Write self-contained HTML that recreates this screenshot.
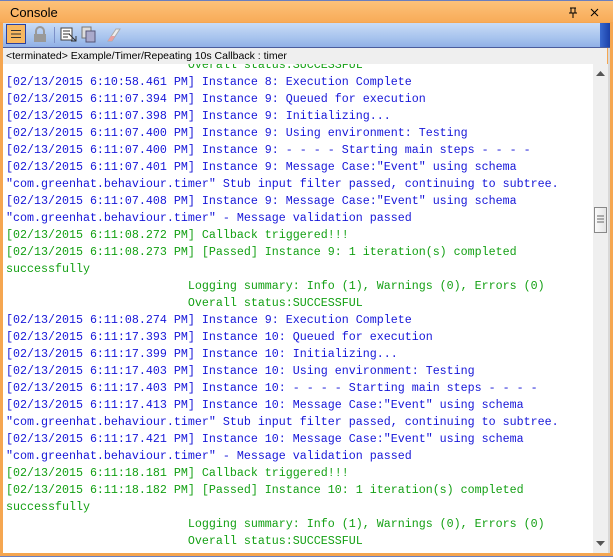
<!DOCTYPE html>
<html><head><style>
body{margin:0;width:613px;height:557px;overflow:hidden;background:#f5a650;font-family:"Liberation Sans",sans-serif;position:relative}
.title{position:absolute;left:0;top:0;width:613px;height:22px;background:linear-gradient(#fcc27a,#f8ab58);border-top:1px solid #6a7fbf;box-sizing:border-box}
.title span{position:absolute;left:10px;top:4px;font-size:13px;color:#000}
.tb{position:absolute;left:3px;top:23px;width:607px;height:24px;background:linear-gradient(#c9dcf6,#a8c4ee 60%,#90b0e6);border-bottom:1px solid #4a5c9c}
.tbend{position:absolute;right:0;top:0;width:10px;height:24px;background:linear-gradient(90deg,#3a6ad0,#1a40a8)}
.path{position:absolute;left:3px;top:48px;width:604px;height:16px;background:#efefef;font-size:10.5px;line-height:16px;padding-left:3px;box-sizing:border-box}
.con{position:absolute;left:3px;top:64px;width:590px;height:489px;background:#fff;overflow:hidden}
.lines{position:absolute;left:3px;top:-7px;font-family:"Liberation Mono",monospace;font-size:11.67px;line-height:17px;white-space:pre}
.b{color:#1616d8}.g{color:#14a014}
.sb{position:absolute;left:593px;top:64px;width:15px;height:489px;background:#efefef;border-right:1px solid #ccc}
.edge{position:absolute;left:608px;top:48px;width:2px;height:505px;background:#d8d8d8}
.bot{position:absolute;left:0;top:553px;width:613px;height:4px;background:#f5a650;border-bottom:1px solid #6a7fbf;box-sizing:border-box}
</style></head><body>
<div class="title"><span>Console</span>
<svg style="position:absolute;left:568px;top:6px" width="10" height="11"><path d="M2 1h6M3 1v5M7 1v5M1 6h8M5 6v5" stroke="#000" fill="none"/></svg>
<svg style="position:absolute;left:590px;top:7px" width="9" height="9"><path d="M1 1l7 7M8 1l-7 7" stroke="#000"/></svg>
</div>
<div class="tb">
<div style="position:absolute;left:3px;top:1px;width:20px;height:20px;background:#f8b860;border:1px solid #2a40a0;box-sizing:border-box"></div>
<svg style="position:absolute;left:7px;top:6px" width="12" height="10"><path d="M1 1.5h10M1 5h10M1 8.5h10" stroke="#333"/></svg>
<svg style="position:absolute;left:30px;top:3px" width="14" height="17"><path d="M3 8V5a4 4 0 0 1 8 0v3" stroke="#999" fill="none" stroke-width="2"/><rect x="1" y="8" width="12" height="8" fill="#999"/></svg>
<div style="position:absolute;left:51px;top:4px;width:1px;height:16px;background:#7c90c8"></div>
<svg style="position:absolute;left:57px;top:3px" width="18" height="18"><rect x="1" y="2" width="11" height="12" fill="#fff" stroke="#444"/><path d="M3 5h7M3 8h7M3 11h5M9 8l7 7M11 15h5v-5" stroke="#333" fill="none"/></svg>
<svg style="position:absolute;left:78px;top:3px" width="16" height="18"><rect x="1" y="1" width="9" height="11" fill="#ddd" stroke="#777"/><rect x="5" y="5" width="9" height="11" fill="#aac" stroke="#557"/></svg>
<svg style="position:absolute;left:102px;top:4px" width="16" height="16"><path d="M3 14l8-12h4l-8 12z" fill="#eee" stroke="#aaa"/><path d="M3 14l3-5h4l-3 5z" fill="#e9a0a0"/></svg>
<div class="tbend"></div>
</div>
<div class="path">&lt;terminated&gt; Example/Timer/Repeating 10s Callback : timer</div>
<div class="con"><div class="lines"><span class="g">                          Overall status:SUCCESSFUL</span>
<span class="b">[02/13/2015 6:10:58.461 PM] Instance 8: Execution Complete</span>
<span class="b">[02/13/2015 6:11:07.394 PM] Instance 9: Queued for execution</span>
<span class="b">[02/13/2015 6:11:07.398 PM] Instance 9: Initializing...</span>
<span class="b">[02/13/2015 6:11:07.400 PM] Instance 9: Using environment: Testing</span>
<span class="b">[02/13/2015 6:11:07.400 PM] Instance 9: - - - - Starting main steps - - - -</span>
<span class="b">[02/13/2015 6:11:07.401 PM] Instance 9: Message Case:"Event" using schema</span>
<span class="b">"com.greenhat.behaviour.timer" Stub input filter passed, continuing to subtree.</span>
<span class="b">[02/13/2015 6:11:07.408 PM] Instance 9: Message Case:"Event" using schema</span>
<span class="b">"com.greenhat.behaviour.timer" - Message validation passed</span>
<span class="g">[02/13/2015 6:11:08.272 PM] Callback triggered!!!</span>
<span class="g">[02/13/2015 6:11:08.273 PM] [Passed] Instance 9: 1 iteration(s) completed</span>
<span class="g">successfully</span>
<span class="g">                          Logging summary: Info (1), Warnings (0), Errors (0)</span>
<span class="g">                          Overall status:SUCCESSFUL</span>
<span class="b">[02/13/2015 6:11:08.274 PM] Instance 9: Execution Complete</span>
<span class="b">[02/13/2015 6:11:17.393 PM] Instance 10: Queued for execution</span>
<span class="b">[02/13/2015 6:11:17.399 PM] Instance 10: Initializing...</span>
<span class="b">[02/13/2015 6:11:17.403 PM] Instance 10: Using environment: Testing</span>
<span class="b">[02/13/2015 6:11:17.403 PM] Instance 10: - - - - Starting main steps - - - -</span>
<span class="b">[02/13/2015 6:11:17.413 PM] Instance 10: Message Case:"Event" using schema</span>
<span class="b">"com.greenhat.behaviour.timer" Stub input filter passed, continuing to subtree.</span>
<span class="b">[02/13/2015 6:11:17.421 PM] Instance 10: Message Case:"Event" using schema</span>
<span class="b">"com.greenhat.behaviour.timer" - Message validation passed</span>
<span class="g">[02/13/2015 6:11:18.181 PM] Callback triggered!!!</span>
<span class="g">[02/13/2015 6:11:18.182 PM] [Passed] Instance 10: 1 iteration(s) completed</span>
<span class="g">successfully</span>
<span class="g">                          Logging summary: Info (1), Warnings (0), Errors (0)</span>
<span class="g">                          Overall status:SUCCESSFUL</span>
</div></div>
<div class="sb">
<svg style="position:absolute;left:3px;top:7px" width="9" height="5"><path d="M0 5L4.5 0 9 5z" fill="#555"/></svg>
<div style="position:absolute;left:1px;top:143px;width:13px;height:26px;background:linear-gradient(90deg,#fafafa,#e4e4e4);border:1px solid #888;box-sizing:border-box"></div>
<svg style="position:absolute;left:4px;top:151px" width="7" height="10"><path d="M0 1h7M0 4h7M0 7h7" stroke="#666"/></svg>
<svg style="position:absolute;left:3px;top:477px" width="9" height="5"><path d="M0 0L4.5 5 9 0z" fill="#555"/></svg>
</div>
<div class="edge"></div>
<div class="bot"></div>
</body></html>
